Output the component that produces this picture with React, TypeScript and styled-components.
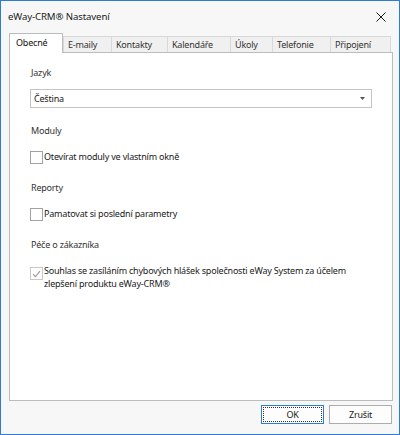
import styled, { createGlobalStyle } from "styled-components";

const GlobalStyle = createGlobalStyle`
  html, body {
    margin: 0;
    padding: 0;
    background: #f7f7f7;
  }
  * {
    box-sizing: border-box;
  }
`;

const tabs = [
  { label: "Obecné", width: 54 },
  { label: "E-maily", width: 49 },
  { label: "Kontakty", width: 57 },
  { label: "Kalendáře", width: 64 },
  { label: "Úkoly", width: 43 },
  { label: "Telefonie", width: 59 },
  { label: "Připojení", width: 61 },
];

const CheckMark = () => (
  <svg width="9" height="8" viewBox="0 0 9 8">
    <path d="M1 4.2 L3.4 6.6 L8 1.2" fill="none" stroke="#9a9a9a" strokeWidth="1.1" />
  </svg>
);

const App = () => {
  return (
    <>
      <GlobalStyle />
      <Window>
        <TitleBar>
          <Title>eWay-CRM® Nastavení</Title>
          <CloseButton aria-label="Zavřít">
            <svg width="10" height="10" viewBox="0 0 10 10">
              <path d="M0.5 0.5 L9.5 9.5 M9.5 0.5 L0.5 9.5" stroke="#1a1a1a" strokeWidth="1" />
            </svg>
          </CloseButton>
        </TitleBar>

        <Body>
          <TabStrip>
            {tabs.map((t, i) => (
              <Tab key={t.label} $active={i === 0} $width={t.width}>
                {t.label}
              </Tab>
            ))}
          </TabStrip>

          <Panel>
            <SectionLabel>Jazyk</SectionLabel>
            <Select>
              <span>Čeština</span>
              <svg width="5" height="3" viewBox="0 0 5 3">
                <path d="M0 0 H5 L2.5 3 Z" fill="#555" />
              </svg>
            </Select>

            <SectionLabel $gap>Moduly</SectionLabel>
            <CheckRow>
              <Box />
              <CheckText>Otevírat moduly ve vlastním okně</CheckText>
            </CheckRow>

            <SectionLabel $gap>Reporty</SectionLabel>
            <CheckRow>
              <Box />
              <CheckText>Pamatovat si poslední parametry</CheckText>
            </CheckRow>

            <SectionLabel $gap>Péče o zákazníka</SectionLabel>
            <CheckRow>
              <Box $disabled>
                <CheckMark />
              </Box>
              <CheckText $multi>
                Souhlas se zasíláním chybových hlášek společnosti eWay System za účelem
                zlepšení produktu eWay-CRM®
              </CheckText>
            </CheckRow>
          </Panel>

          <Footer>
            <Button $primary>
              <FocusRect>OK</FocusRect>
            </Button>
            <Button>Zrušit</Button>
          </Footer>
        </Body>
      </Window>
    </>
  );
};

export default App;

const Window = styled.div`
  width: 400px;
  height: 435px;
  border: 1px solid #2b7cd3;
  background: #f7f7f7;
  display: flex;
  flex-direction: column;
  font-family: "Noto Sans", "DejaVu Sans", sans-serif;
  font-size: 9px;
  letter-spacing: -0.2px;
  color: #1a1a1a;
`;

const TitleBar = styled.div`
  height: 32px;
  display: flex;
  align-items: center;
  justify-content: space-between;
  padding: 0 13px 2px 7px;
`;

const Title = styled.div`
  font-size: 9.6px;
  letter-spacing: -0.1px;
  color: #1a1a1a;
`;

const CloseButton = styled.div`
  display: flex;
  align-items: center;
  margin-top: 1px;
`;

const Body = styled.div`
  display: flex;
  flex-direction: column;
  padding: 0 6px 0 8px;
`;

const TabStrip = styled.div`
  display: flex;
  align-items: flex-end;
  height: 19px;
`;

const Tab = styled.div<{ $active?: boolean; $width: number }>`
  width: ${(p) => p.$width}px;
  height: ${(p) => (p.$active ? 20 : 16)}px;
  margin-bottom: ${(p) => (p.$active ? -1 : 0)}px;
  margin-left: ${(p) => (p.$active ? 0 : -1)}px;
  &:nth-child(2) {
    margin-left: 0;
  }
  padding-left: ${(p) => (p.$active ? 6 : 4)}px;
  padding-bottom: ${(p) => (p.$active ? 2 : 0)}px;
  display: flex;
  align-items: center;
  background: ${(p) => (p.$active ? "#ffffff" : "#f0f0f0")};
  border: 1px solid ${(p) => (p.$active ? "#bcbcbc" : "#d9d9d9")};
  border-bottom: none;
  color: ${(p) => (p.$active ? "#111" : "#333")};
  position: relative;
  z-index: ${(p) => (p.$active ? 2 : 1)};
  white-space: nowrap;
`;

const Panel = styled.div`
  width: 384px;
  height: 349px;
  background: #ffffff;
  border: 1px solid #bcbcbc;
  padding: 12px 20px 0 20px;
  display: flex;
  flex-direction: column;
`;

const SectionLabel = styled.div<{ $gap?: boolean }>`
  line-height: 16px;
  color: #333;
  margin-top: ${(p) => (p.$gap ? 15 : 0)}px;
  margin-left: 1px;
`;

const Select = styled.div`
  margin-top: 8px;
  height: 19px;
  border: 1px solid #c4c4c4;
  background: #fff;
  display: flex;
  align-items: center;
  justify-content: space-between;
  padding: 0 6px 0 3px;
  color: #1a1a1a;
`;

const CheckRow = styled.div`
  display: flex;
  align-items: flex-start;
  margin-top: 10px;
`;

const Box = styled.div<{ $disabled?: boolean }>`
  width: 13px;
  height: 13px;
  flex: none;
  margin-top: ${(p) => (p.$disabled ? 4 : 2)}px;
  margin-right: 1px;
  border: 1px solid ${(p) => (p.$disabled ? "#c8c8c8" : "#a3a3a3")};
  background: #fff;
  display: flex;
  align-items: center;
  justify-content: center;
`;

const CheckText = styled.div<{ $multi?: boolean }>`
  line-height: ${(p) => (p.$multi ? 13 : 16)}px;
  padding-top: ${(p) => (p.$multi ? 1 : 0)}px;
  color: #1a1a1a;
  width: ${(p) => (p.$multi ? "310px" : "auto")};
`;

const Footer = styled.div`
  display: flex;
  justify-content: flex-end;
  gap: 5px;
  margin-top: 4px;
  padding-right: 1px;
`;

const Button = styled.div<{ $primary?: boolean }>`
  width: 63px;
  height: 19px;
  display: flex;
  align-items: center;
  justify-content: center;
  background: #fdfdfd;
  border: 1px solid ${(p) => (p.$primary ? "#2b7cd3" : "#adadad")};
  padding: ${(p) => (p.$primary ? "1px" : "0")};
  color: #1a1a1a;
`;

const FocusRect = styled.div`
  width: 100%;
  height: 100%;
  border: 1px dotted #333;
  display: flex;
  align-items: center;
  justify-content: center;
`;
